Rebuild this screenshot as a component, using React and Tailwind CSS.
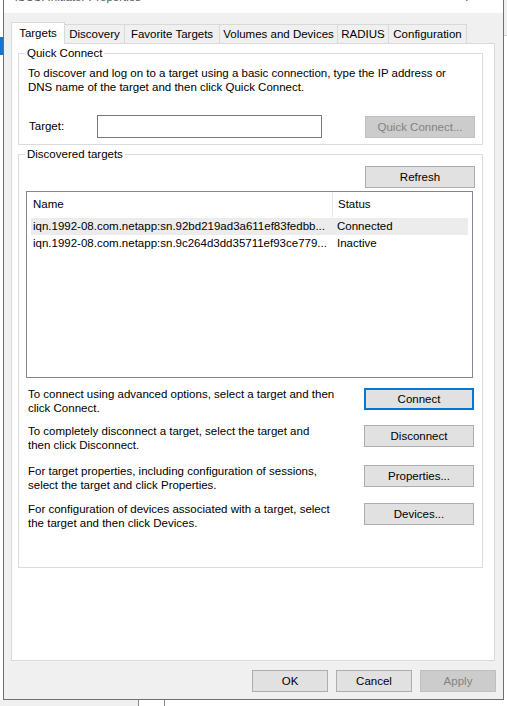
import React from "react";

// iSCSI Initiator Properties – Targets tab

const TABS = [
  { label: "Targets", w: "w-[54px]", active: true },
  { label: "Discovery", w: "w-[60px]" },
  { label: "Favorite Targets", w: "w-[95px]" },
  { label: "Volumes and Devices", w: "w-[118px]" },
  { label: "RADIUS", w: "w-[51px]" },
  { label: "Configuration", w: "w-[78px]" },
];

const TARGETS = [
  { name: "iqn.1992-08.com.netapp:sn.92bd219ad3a611ef83fedbb...", status: "Connected", selected: true },
  { name: "iqn.1992-08.com.netapp:sn.9c264d3dd35711ef93ce779...", status: "Inactive" },
];

const ACTIONS = [
  { lines: ["To connect using advanced options, select a target and then", "click Connect."], label: "Connect", gap: "mt-[10px]", primary: true },
  { lines: ["To completely disconnect a target, select the target and", "then click Disconnect."], label: "Disconnect", gap: "mt-[10px]" },
  { lines: ["For target properties, including configuration of sessions,", "select the target and click Properties."], label: "Properties...", gap: "mt-[13px]" },
  { lines: ["For configuration of devices associated with a target, select", "the target and then click Devices."], label: "Devices...", gap: "mt-[11px]" },
];

function WinButton({ children, className = "", disabled, primary }) {
  let look = "bg-[#e1e1e1] border-[#adadad] text-black";
  if (disabled) look = "bg-[#cccccc] border-[#bfbfbf] text-[#838383]";
  if (primary) look = "bg-[#e1e1e1] border-[#0078d7] text-black shadow-[inset_0_0_0_1px_#0078d7]";
  return (
    <button type="button" className={`h-[22px] shrink-0 border leading-[14px] ${look} ${className}`}>
      {children}
    </button>
  );
}

function GroupBox({ title, className = "", children }) {
  return (
    <fieldset className={`border border-[#dcdcdc] ${className}`}>
      <legend className="ml-[6px] px-[2px] leading-[14px]">{title}</legend>
      {children}
    </fieldset>
  );
}

export default function App() {
  return (
    <div className="w-[507px] h-[706px] bg-white overflow-hidden font-['Segoe_UI','Liberation_Sans',sans-serif] text-[11.5px] text-black">
      <div className="flex h-[700px]">
        {/* edge of the window behind */}
        <div className="w-[3px] flex flex-col">
          <div className="h-[37px]" />
          <div className="h-[18px] bg-[#1a73c7]" />
        </div>

        <div className="w-[501px] border-x border-b border-[#6f6f6f] bg-[#f0f0f0] flex flex-col">
          {/* title bar, scrolled mostly out of view */}
          <div className="h-[13px] bg-white overflow-hidden flex justify-between px-[11px]">
            <span className="-mt-[10px] leading-[14px] text-[#555]">iSCSI Initiator Properties</span>
            <span className="-mt-[10px] leading-[14px] text-[#555] tracking-[4px]">? ×</span>
          </div>

          <div className="ml-[7px] mt-[9px] w-[484px]">
            <div className="flex items-end h-[21px]">
              {TABS.map((t) =>
                t.active ? (
                  <div
                    key={t.label}
                    className={`${t.w} h-[22px] -mb-px relative z-10 bg-white border-x border-t border-[#d9d9d9] flex items-center justify-center leading-[14px] pb-[2px]`}
                  >
                    {t.label}
                  </div>
                ) : (
                  <div
                    key={t.label}
                    className={`${t.w} h-[19px] bg-[#f0f0f0] border-t border-r border-[#d9d9d9] flex items-center justify-center leading-[14px]`}
                  >
                    {t.label}
                  </div>
                )
              )}
            </div>

            <div className="h-[618px] bg-white border border-[#d9d9d9] pl-[6px] pt-[2px]">
              <GroupBox title="Quick Connect" className="w-[465px]">
                <div className="pl-[9px] pr-[7px] pb-[6px]">
                  <p className="mt-[6px] leading-[14px]">
                    To discover and log on to a target using a basic connection, type the IP address or
                    <br />
                    DNS name of the target and then click Quick Connect.
                  </p>
                  <div className="mt-[21px] flex items-center h-[23px]">
                    <span className="w-[69px] pl-px">Target:</span>
                    <div className="w-[225px] h-[23px] border border-[#7a7a7a] bg-white" />
                    <div className="flex-1" />
                    <WinButton disabled className="w-[110px]">Quick Connect...</WinButton>
                  </div>
                </div>
              </GroupBox>

              <GroupBox title="Discovered targets" className="mt-[2px] w-[465px] h-[421px]">
                <div className="px-[7px]">
                  <div className="mt-[5px] flex justify-end">
                    <WinButton className="w-[110px]">Refresh</WinButton>
                  </div>

                  <div className="mt-[3px] w-[447px] h-[187px] border border-[#828790] bg-white">
                    <div className="flex h-[25px]">
                      <div className="w-[306px] pl-[6px] border-r border-[#e5e5e5] flex items-center">Name</div>
                      <div className="pl-[5px] flex items-center">Status</div>
                    </div>
                    <div className="mt-px mx-[4px] flex flex-col">
                      {TARGETS.map((t) => (
                        <div
                          key={t.name}
                          className={`flex h-[17px] items-center whitespace-nowrap ${t.selected ? "bg-[#ececec]" : ""}`}
                        >
                          <span className="w-[301px] pl-[2px] overflow-hidden">{t.name}</span>
                          <span className="pl-[5px]">{t.status}</span>
                        </div>
                      ))}
                    </div>
                  </div>

                  {ACTIONS.map((a) => (
                    <div key={a.label} className={`${a.gap} flex items-start justify-between pl-[2px] pr-[1px]`}>
                      <p className="leading-[14px] -mt-px whitespace-nowrap">
                        {a.lines[0]}
                        <br />
                        {a.lines[1]}
                      </p>
                      <WinButton primary={a.primary} className="w-[110px]">
                        {a.label}
                      </WinButton>
                    </div>
                  ))}
                </div>
              </GroupBox>
            </div>
          </div>

          <div className="mt-[9px] mr-[7px] flex justify-end gap-[8px]">
            <WinButton className="w-[76px]">OK</WinButton>
            <WinButton className="w-[76px]">Cancel</WinButton>
            <WinButton disabled className="w-[76px]">Apply</WinButton>
          </div>
        </div>

        {/* edge of the window to the right */}
        <div className="flex-1 flex flex-col">
          <div className="h-[36px] bg-[#f0f0f0] border-b border-[#d0d0d0]" />
        </div>
      </div>

      <div className="flex h-[6px]">
        <div className="w-[139px] bg-[#f0f0f0] border-r border-[#8a8a8a]" />
        <div className="w-[26px] border-r border-[#8a8a8a]" />
      </div>
    </div>
  );
}
